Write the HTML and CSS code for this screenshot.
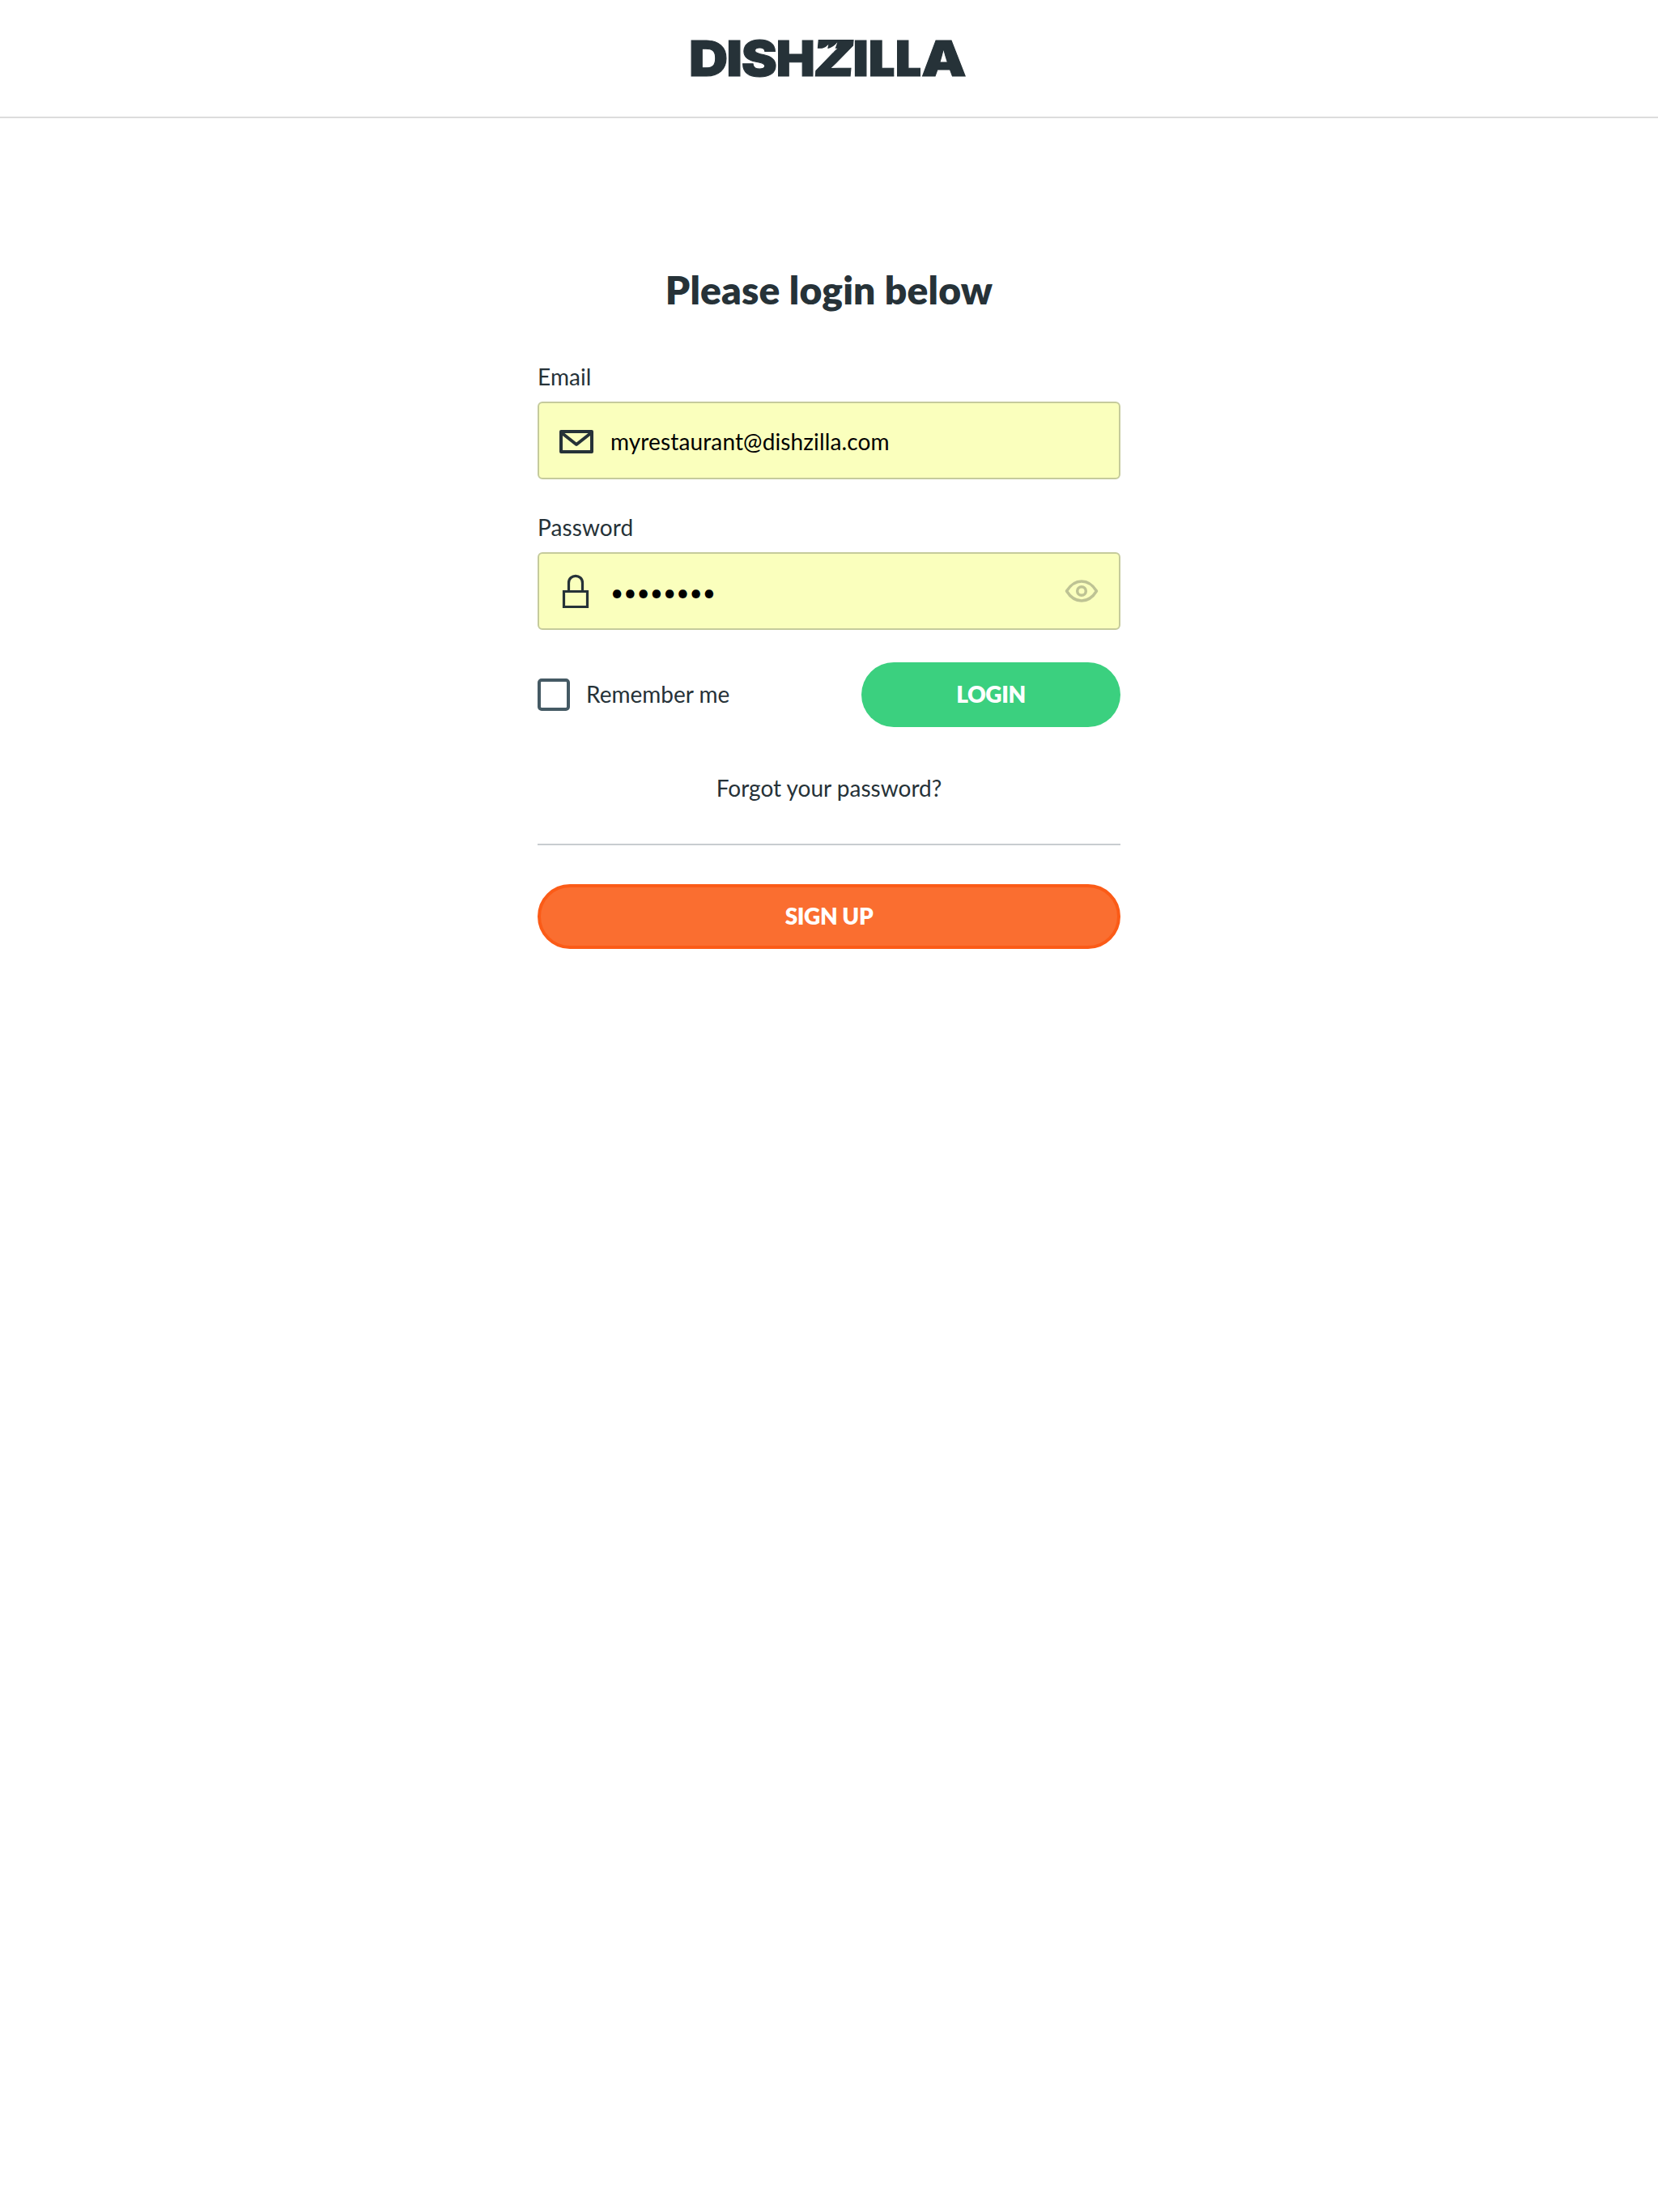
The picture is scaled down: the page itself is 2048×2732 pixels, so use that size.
FILE: index.html
```html
<!DOCTYPE html>
<html lang="en">
<head>
<meta charset="utf-8">
<title>Dishzilla – Login</title>
<link rel="stylesheet" href="styles.css">
</head>
<body>
<header class="header">
  <svg class="logo" viewBox="0 0 340 50" role="img" aria-label="Dishzilla">
    <clipPath id="l1"><path d="M221 0H250.300V50H221Z"/></clipPath>
    <clipPath id="l2"><path d="M254 0H283V50H254Z"/></clipPath>
    <g class="logo-text">
      <text transform="translate(-3 47) scale(1.095 1)">D</text>
      <text transform="translate(43.300 47) scale(1.120 1)">I</text>
      <text transform="translate(61.800 47) scale(1.088 1)">S</text>
      <text transform="translate(104.500 47) scale(1.060 1)">H</text>
      <text transform="translate(149.800 47) skewX(-5) scale(1.180 1)">Z</text>
      <text transform="translate(199.300 47) scale(1.120 1)">I</text>
      <g clip-path="url(#l1)"><text transform="translate(218 47) scale(1.150 1)">L</text></g>
      <g clip-path="url(#l2)"><text transform="translate(250.800 47) scale(1.150 1)">L</text></g>
      <text transform="translate(284 47) scale(1.150 1)">A</text>
    </g>
    <path class="logo-notch" d="M156 14.200Q165 13 169.300 8L168 13.700Q176 11 180.300 5.300Q178.500 12 175 18H156Z"/>
  </svg>
</header>
<main class="login">
  <h1 class="title">Please login below</h1>
  <form class="form">
    <label class="label" for="email">Email</label>
    <div class="field">
      <svg class="icon" viewBox="0 0 48 48"><path d="M5 12.500H43V37.500H5ZM5 13.500L24 28.500L43 13.500" transform="translate(0 .5)" stroke-width="4" stroke-linejoin="round"/></svg>
      <input class="input" id="email" type="text" value="myrestaurant@dishzilla.com">
    </div>
    <label class="label" for="password">Password</label>
    <div class="field">
      <svg class="icon" viewBox="0 0 48 48"><path d="M8.500 24.500H37.500V43.500H8.500ZM14.500 24V14C14.500 2.500 31.500 2.500 31.500 14V24" stroke-width="3.200"/></svg>
      <input class="input" id="password" type="password" value="password">
      <svg class="icon eye" viewBox="0 0 48 48"><path d="M5.500 24C15.500 8 32.500 8 42.500 24C32.500 40 15.500 40 5.500 24Z" stroke-width="3.500" stroke-linejoin="round"/><circle cx="24" cy="24" r="5.300" stroke-width="3.500"/></svg>
    </div>
    <div class="actions">
      <label class="remember"><input class="checkbox" type="checkbox"><span class="remember-text">Remember me</span></label>
      <button class="button button-login" type="button">LOGIN</button>
    </div>
    <a class="forgot">Forgot your password?</a>
    <button class="button button-signup" type="button">SIGN UP</button>
  </form>
</main>
</body>
</html>
```
FILE: styles.css
```css
* { box-sizing: border-box; }
body {
  margin: 0;
  background: #fff;
  color: #263238;
  font: 28px/40px Lato, "Liberation Sans", sans-serif;
}
.header {
  height: 146px;
  border-bottom: 2px solid #dcdcdc;
  display: flex;
  justify-content: center;
  padding-top: 47px;
}
.logo { width: 340px; height: 50px; overflow: visible; }
.logo-text {
  font: 900 61px Inter, Lato, sans-serif;
  fill: #263238;
  stroke: #263238;
  stroke-width: 1px;
}
.logo-notch { fill: #fff; }
.login { width: 720px; margin: 0 auto; padding-top: 180px; }
.title {
  margin: 0;
  font-size: 48px;
  line-height: 64px;
  font-weight: 800;
  letter-spacing: 0.15px;
  text-align: center;
}
.form { display: flex; flex-direction: column; padding-top: 55px; }
.label { height: 51px; line-height: 40px; letter-spacing: 0.1px; }
.field {
  height: 96px;
  display: flex;
  align-items: center;
  background: #faffbd;
  border: 2px solid #c5cb9c;
  border-radius: 6px;
  padding: 0 22px;
  margin-bottom: 39px;
}
.icon { width: 48px; height: 48px; flex: none; fill: none; stroke: #263238; }
.eye { stroke: #bec394; }
.input {
  flex: 1;
  min-width: 0;
  height: 80px;
  border: 0;
  outline: 0;
  padding: 2px 0 0 18px;
  background: none;
  color: #000;
  font: inherit;
}
#email { letter-spacing: 0.13px; }
.actions {
  display: flex;
  justify-content: space-between;
  align-items: center;
  height: 80px;
  margin-top: 1px;
}
.remember { display: flex; align-items: center; gap: 20px; }
.remember-text { padding-bottom: 2px; }
.checkbox {
  appearance: none;
  width: 40px;
  height: 40px;
  margin: 0;
  border: 4px solid #455a64;
  border-radius: 5px;
}
.button {
  height: 80px;
  border: 0;
  border-radius: 40px;
  padding: 0 0 2px;
  color: #fff;
  font: 800 28px/40px Lato, sans-serif;
  letter-spacing: -0.4px;
}
.button-login { width: 320px; background: #3bd07f; }
.forgot {
  height: 146px;
  padding-top: 55px;
  border-bottom: 2px solid #c8ccd0;
  text-align: center;
}
.button-signup { margin-top: 48px; background: #fa6e30; border: 4px solid #fb5b17; }
```
